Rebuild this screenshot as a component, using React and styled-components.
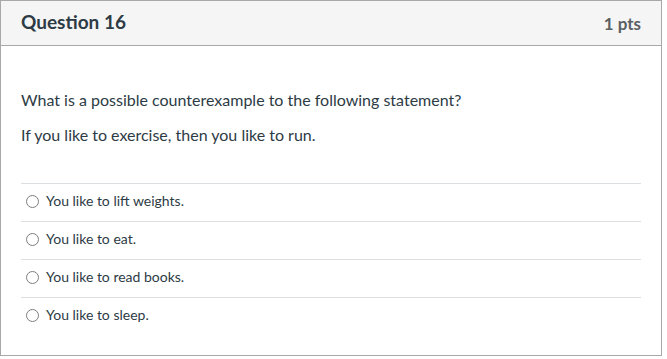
import React from 'react';
import styled, { createGlobalStyle } from 'styled-components';

const GlobalStyle = createGlobalStyle`
  html, body {
    margin: 0;
    background: #fff;
  }
  body {
    font-family: Lato, "Open Sans", "Liberation Sans", sans-serif;
    color: #2d3b45;
  }
`;

const Card = styled.div`
  width: 660px;
  height: 354px;
  border: 1px solid #a8a8a8;
  box-sizing: content-box;
  background: #fff;
`;

const Header = styled.div`
  display: flex;
  align-items: center;
  justify-content: space-between;
  height: 41px;
  padding: 0 20px 3px;
  background: #f5f5f5;
  border-bottom: 1px solid #a8a8a8;
`;

const Title = styled.h2`
  margin: 0;
  font-size: 19px;
  font-weight: 700;
  color: #2d3b45;
`;

const Points = styled.span`
  font-size: 17px;
  font-weight: 700;
  color: #5a5f63;
  margin-top: 3px;
`;

const Body = styled.div`
  padding: 42px 20px 20px;
`;

const Paragraph = styled.p`
  margin: 0 0 11px;
  font-size: 16px;
  line-height: 24px;
`;

const Answers = styled.div`
  margin-top: 36px;
`;

const Answer = styled.label`
  display: flex;
  align-items: center;
  height: 33px;
  padding-bottom: 4px;
  border-top: 1px solid #dcdfe1;
  font-size: 14px;
  color: #2d3b45;
`;

const Radio = styled.span`
  width: 11px;
  height: 11px;
  margin: 2px 7px 0 5px;
  border: 1px solid #7d7d7d;
  border-radius: 50%;
  background: #fff;
  flex-shrink: 0;
`;

const answers = [
  'You like to lift weights.',
  'You like to eat.',
  'You like to read books.',
  'You like to sleep.',
];

export default function App() {
  return (
    <>
      <GlobalStyle />
      <Card>
        <Header>
          <Title>Question 16</Title>
          <Points>1 pts</Points>
        </Header>
        <Body>
          <Paragraph>What is a possible counterexample to the following statement?</Paragraph>
          <Paragraph>If you like to exercise, then you like to run.</Paragraph>
          <Answers>
            {answers.map((a) => (
              <Answer key={a}>
                <Radio />
                {a}
              </Answer>
            ))}
          </Answers>
        </Body>
      </Card>
    </>
  );
}
